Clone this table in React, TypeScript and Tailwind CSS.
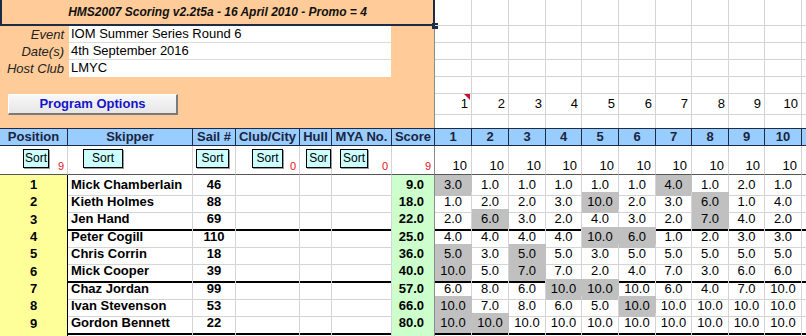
import React from 'react'

// column grid of the score sheet (Excel-like)
const COLS = 'grid grid-cols-[68px_125px_43px_64px_32px_60px_43px_37px_37px_37px_36px_37px_37px_36px_37px_36px_37px_60px]'
const RACE_COLS = 'grid grid-cols-[37px_37px_37px_36px_37px_37px_36px_37px_36px_37px_60px]'

type Row = {
  pos: number
  name: string
  sail: number
  score: string
  races: string[]
  grey: number[]
  thick?: boolean
}

const ROWS: Row[] = [
  { pos: 1, name: 'Mick Chamberlain', sail: 46, score: '9.0', races: ['3.0', '1.0', '1.0', '1.0', '1.0', '1.0', '4.0', '1.0', '2.0', '1.0'], grey: [0, 6] },
  { pos: 2, name: 'Kieth Holmes', sail: 88, score: '18.0', races: ['1.0', '2.0', '2.0', '3.0', '10.0', '2.0', '3.0', '6.0', '1.0', '4.0'], grey: [4, 7] },
  { pos: 3, name: 'Jen Hand', sail: 69, score: '22.0', races: ['2.0', '6.0', '3.0', '2.0', '4.0', '3.0', '2.0', '7.0', '4.0', '2.0'], grey: [1, 7], thick: true },
  { pos: 4, name: 'Peter Cogill', sail: 110, score: '25.0', races: ['4.0', '4.0', '4.0', '4.0', '10.0', '6.0', '1.0', '2.0', '3.0', '3.0'], grey: [4, 5] },
  { pos: 5, name: 'Chris Corrin', sail: 18, score: '36.0', races: ['5.0', '3.0', '5.0', '5.0', '3.0', '5.0', '5.0', '5.0', '5.0', '5.0'], grey: [0, 2] },
  { pos: 6, name: 'Mick Cooper', sail: 39, score: '40.0', races: ['10.0', '5.0', '7.0', '7.0', '2.0', '4.0', '7.0', '3.0', '6.0', '6.0'], grey: [0, 2], thick: true },
  { pos: 7, name: 'Chaz Jordan', sail: 99, score: '57.0', races: ['6.0', '8.0', '6.0', '10.0', '10.0', '10.0', '6.0', '4.0', '7.0', '10.0'], grey: [3, 4] },
  { pos: 8, name: 'Ivan Stevenson', sail: 53, score: '66.0', races: ['10.0', '7.0', '8.0', '6.0', '5.0', '10.0', '10.0', '10.0', '10.0', '10.0'], grey: [0, 5] },
  { pos: 9, name: 'Gordon Bennett', sail: 22, score: '80.0', races: ['10.0', '10.0', '10.0', '10.0', '10.0', '10.0', '10.0', '10.0', '10.0', '10.0'], grey: [0, 1], thick: true },
]

const HEADERS = ['Position', 'Skipper', 'Sail #', 'Club/City', 'Hull', 'MYA No.', 'Score', '1', '2', '3', '4', '5', '6', '7', '8', '9', '10', '']

function SortBtn({ w, label = 'Sort' }: { w: string; label?: string }) {
  return (
    <div className={`${w} h-[19px] flex items-start justify-center pt-[1px] bg-[#ccffff] border border-black shadow-[1px_1px_0_#9a9a9a] text-[12px] leading-[15px] text-black overflow-hidden whitespace-nowrap`}>
      {label}
    </div>
  )
}

function Red({ n }: { n: number }) {
  return <span className="absolute right-[3px] bottom-[2px] text-[11px] leading-none text-[#e3141c]">{n}</span>
}

export default function App() {
  const topRows = [0, 1, 2, 3, 4, 5, 6]
  const raceIdx = [0, 1, 2, 3, 4, 5, 6, 7, 8, 9, 10]

  return (
    <div className="w-[806px] h-[336px] overflow-hidden bg-white font-['Liberation_Sans',Arial,sans-serif] text-black">
      {/* Top: peach event panel + empty sheet cells */}
      <div className="flex h-[128px]">
        <div className="relative w-[435px] shrink-0 flex flex-col bg-[#ffcc99]">
          <div className="h-[26px] flex items-center justify-center border-l-2 border-r-2 border-b-2 border-[#1d2b47] text-[12px] font-bold italic text-[#111]">
            HMS2007 Scoring v2.2t5a - 16 April 2010 - Promo = 4
          </div>
          <span className="absolute left-[432px] top-[23px] w-[6px] h-[6px] bg-[#1d2b47]" />
          <div className="flex-1 flex flex-col border-r border-[#8c8c8c]">
            {[
              ['Event', 'IOM Summer Series Round 6'],
              ['Date(s)', '4th September 2016'],
              ['Host Club', 'LMYC'],
            ].map(([k, v], i) => (
              <div key={k} className="flex h-[17px]">
                <div className="w-[69px] pr-[5px] text-right italic text-[13px] leading-[17px] text-[#222]">{k}</div>
                <div className={`w-[322px] pl-[2px] bg-white text-[13px] leading-[16px] ${i < 2 ? 'border-b border-[#dcdcdc]' : ''}`}>{v}</div>
              </div>
            ))}
            <div className="h-[17px]" />
            <div className="ml-[8px] w-[170px] h-[21px] flex items-center justify-center bg-gradient-to-b from-[#f8f8f8] to-[#e6e6e6] border border-white border-r-2 border-b-2 border-r-[#7a7a7a] border-b-[#7a7a7a] text-[13px] font-bold text-[#1414c8]">
              Program Options
            </div>
          </div>
        </div>
        <div className="flex-1 flex flex-col">
          {topRows.map(r => (
            <div key={r} className={`${RACE_COLS} ${r === 0 ? 'h-[26px]' : 'h-[17px]'}`}>
              {raceIdx.map(c => (
                <div
                  key={c}
                  className={`relative border-r border-[#d4d4d4] ${r < 6 ? 'border-b' : ''} flex items-center justify-end pr-[3px] text-[13px]`}>
                  {r === 5 && c < 10 ? c + 1 : ''}
                  {r === 5 && c === 0 && (
                    <svg className="absolute right-[1px] top-0" width="6" height="6" viewBox="0 0 6 6">
                      <polygon points="0,0 6,0 6,6" fill="#c8102e" />
                    </svg>
                  )}
                </div>
              ))}
            </div>
          ))}
        </div>
      </div>

      {/* Header row */}
      <div className={`${COLS} border-t border-[#1d2b47]`}>
        {HEADERS.map((h, i) => (
          <div
            key={i}
            className="h-[17px] flex items-center justify-center bg-[#99ccff] border-r border-b border-[#1d2b47] text-[13px] font-bold text-[#1b2540]">
            {h}
          </div>
        ))}
      </div>

      {/* Sort row */}
      <div className={`${COLS} h-[29px]`}>
        <div className="relative flex pl-[23px] pt-[3px] border-r border-b border-[#d4d4d4] border-b-[#555]">
          <SortBtn w="w-[26px]" />
          <Red n={9} />
        </div>
        <div className="relative flex pl-[15px] pt-[3px] border-r border-b border-[#d4d4d4] border-b-[#555]">
          <SortBtn w="w-[40px]" />
        </div>
        <div className="relative flex pl-[3px] pt-[3px] border-r border-b border-[#d4d4d4] border-b-[#555]">
          <SortBtn w="w-[33px]" />
        </div>
        <div className="relative flex pl-[16px] pt-[3px] border-r border-b border-[#d4d4d4] border-b-[#555]">
          <SortBtn w="w-[31px]" />
          <Red n={0} />
        </div>
        <div className="relative flex pl-[6px] pt-[3px] border-r border-b border-[#d4d4d4] border-b-[#555]">
          <SortBtn w="w-[25px]" label="Sor" />
        </div>
        <div className="relative flex pl-[8px] pt-[3px] border-r border-b border-[#d4d4d4] border-b-[#555]">
          <SortBtn w="w-[28px]" />
          <Red n={0} />
        </div>
        <div className="relative border-r border-b border-[#8c8c8c] border-b-[#555]">
          <Red n={9} />
        </div>
        {raceIdx.map(c => (
          <div key={c} className="flex items-end justify-end pr-[4px] pb-[2px] border-r border-b border-[#d4d4d4] border-b-[#555] text-[13px] leading-none">
            {c < 10 ? '10' : ''}
          </div>
        ))}
      </div>

      {/* Results */}
      {ROWS.map(row => {
        const h = row.thick ? 'h-[18px]' : 'h-[17px]'
        const line = row.thick ? 'border-b-2 border-b-black' : 'border-b border-b-[#d4d4d4]'
        return (
          <div key={row.pos} className={`${COLS} ${h} text-[13px]`}>
            <div className="flex items-center justify-center bg-[#ffff99] border-r border-r-black border-b border-b-[#333] font-bold">
              {row.pos}
            </div>
            <div className={`flex items-center pl-[3px] border-r border-r-[#d4d4d4] ${line} font-bold whitespace-nowrap`}>
              {row.name}
            </div>
            <div className={`flex items-center justify-center border-r border-r-[#d4d4d4] ${line} font-bold`}>
              {row.sail}
            </div>
            <div className={`border-r border-r-[#d4d4d4] ${line}`} />
            <div className={`border-r border-r-[#d4d4d4] ${line}`} />
            <div className={`border-r border-r-[#d4d4d4] ${line}`} />
            <div className={`flex items-center justify-end pr-[10px] bg-[#ccffcc] border-r border-r-[#8c8c8c] ${row.thick ? line : 'border-b border-b-[#ccffcc]'} font-bold`}>
              {row.score}
            </div>
            {raceIdx.map(c => {
              const grey = row.grey.includes(c)
              return (
                <div
                  key={c}
                  className={`flex items-center justify-center border-r ${grey ? 'bg-[#c0c0c0] border-r-[#c0c0c0]' : 'border-r-[#d4d4d4]'} ${row.thick ? line : grey ? 'border-b border-b-[#c0c0c0]' : line}`}>
                  {c < 10 ? row.races[c] : ''}
                </div>
              )
            })}
          </div>
        )
      })}

      {/* next (empty) row */}
      <div className={`${COLS} h-[17px]`}>
        <div className="bg-[#ffff99] border-r border-r-black" />
        <div className="border-r border-[#d4d4d4]" />
        <div className="border-r border-[#d4d4d4]" />
        <div className="border-r border-[#d4d4d4]" />
        <div className="border-r border-[#d4d4d4]" />
        <div className="border-r border-[#d4d4d4]" />
        <div className="bg-[#ccffcc] border-r border-[#8c8c8c]" />
        {raceIdx.map(c => (
          <div key={c} className="border-r border-[#d4d4d4]" />
        ))}
      </div>
    </div>
  )
}
